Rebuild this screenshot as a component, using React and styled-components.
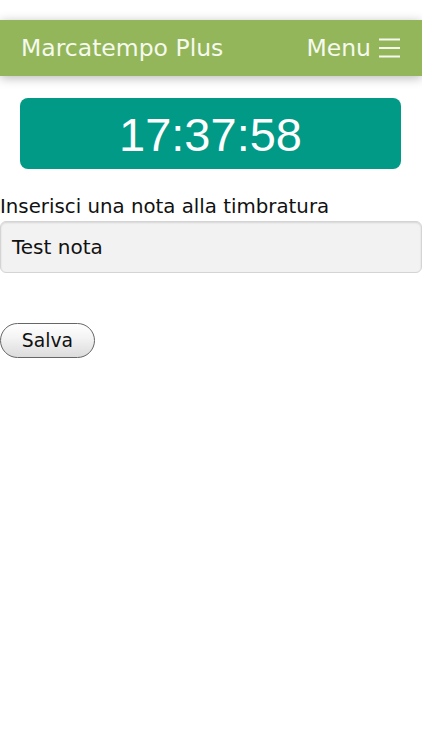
import React from "react";
import styled, { createGlobalStyle } from "styled-components";

const Global = createGlobalStyle`
  html, body { margin: 0; padding: 0; background: #fff; }
  body { font-family: "DejaVu Sans", Verdana, sans-serif; color: #111; }
  * { box-sizing: border-box; }
`;

const Page = styled.div`
  width: 422px;
  min-height: 750px;
  padding-top: 20px;
  overflow: hidden;
`;

const Header = styled.header`
  height: 56px;
  background: #93b65a;
  display: flex;
  align-items: center;
  justify-content: space-between;
  padding: 0 22px 0 21px;
  box-shadow: 0 2px 10px rgba(0, 0, 0, 0.28);
  color: #f6f9ee;
  font-size: 23.5px;
`;

const Title = styled.div`
  white-space: nowrap;
`;

const MenuBtn = styled.div`
  display: flex;
  align-items: center;
  gap: 8px;
`;

const Clock = styled.div`
  margin: 22px 21px 0 20px;
  height: 71px;
  background: #009a86;
  border-radius: 8px;
  display: flex;
  align-items: center;
  justify-content: center;
  color: #fff;
  font-family: "Liberation Sans", Arial, sans-serif;
  font-size: 47px;
  padding-top: 1px;
`;

const Label = styled.label`
  display: block;
  margin-top: 26px;
  font-size: 19.8px;
  line-height: 24px;
`;

const Input = styled.div`
  margin-top: 2px;
  height: 52px;
  width: 422px;
  background: #f2f2f2;
  border: 1px solid #d4d4d4;
  border-radius: 6px;
  box-shadow: inset 0 1px 2px rgba(0, 0, 0, 0.12);
  display: flex;
  align-items: center;
  padding-left: 11px;
  font-size: 20px;
`;

const Button = styled.button`
  margin-top: 50px;
  height: 35px;
  width: 95px;
  border: 1px solid #666;
  border-radius: 18px;
  background: linear-gradient(#ffffff, #f4f4f4 40%, #dcdcdc);
  font-family: "DejaVu Sans", Verdana, sans-serif;
  font-size: 18.8px;
  color: #111;
  padding: 0;
  display: flex;
  align-items: center;
  justify-content: center;
`;

const Hamburger = () => (
  <svg width="21" height="20" viewBox="0 0 21 20">
    <g stroke="#f6f9ee" strokeWidth="2">
      <line x1="0" y1="1.5" x2="21" y2="1.5" />
      <line x1="0" y1="10" x2="21" y2="10" />
      <line x1="0" y1="18.5" x2="21" y2="18.5" />
    </g>
  </svg>
);

export default function App() {
  return (
    <>
      <Global />
      <Page>
        <Header>
          <Title>Marcatempo Plus</Title>
          <MenuBtn>
            <span>Menu</span>
            <Hamburger />
          </MenuBtn>
        </Header>
        <Clock>17:37:58</Clock>
        <Label>Inserisci una nota alla timbratura</Label>
        <Input>Test nota</Input>
        <Button>Salva</Button>
      </Page>
    </>
  );
}
